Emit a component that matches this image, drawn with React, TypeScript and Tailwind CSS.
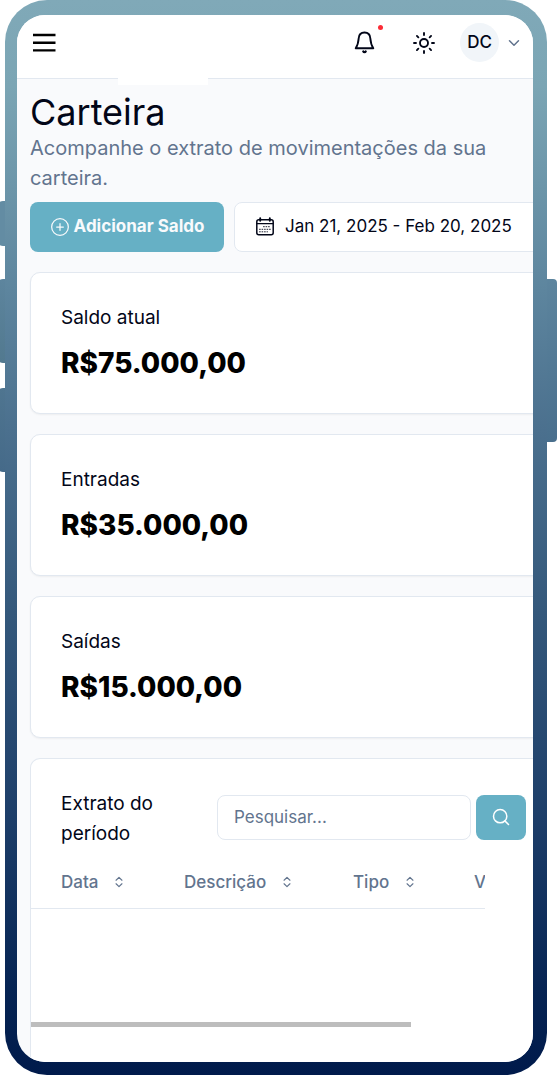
import React from 'react';
import { ChevronDown, ChevronsUpDown, CirclePlus, Search, Sun } from 'lucide-react';

const summary = [
  { label: 'Saldo atual', value: 'R$75.000,00' },
  { label: 'Entradas', value: 'R$35.000,00' },
  { label: 'Saídas', value: 'R$15.000,00' },
];

const MenuIcon: React.FC = () => (
  <svg width="24" height="24" viewBox="0 0 24 24" fill="none" stroke="currentColor" strokeWidth="2.4">
    <path d="M1 4h22.500M1 11.700h22.500M1 19.400h22.500" />
  </svg>
);

const BellIcon: React.FC = () => (
  <svg width="24" height="26" viewBox="0 0 24 26" fill="none" stroke="currentColor" strokeWidth="1.9" strokeLinecap="round" strokeLinejoin="round">
    <path d="M12.500 2.500C8.900 2.500 6.900 4.800 6.700 8.300C6.300 13.500 5.600 15.500 3.700 18.200H21.300C19.400 15.500 18.700 13.500 18.300 8.300C18.100 4.800 16.100 2.500 12.500 2.500Z" />
    <path d="M11.300 21.500c.5.900 1.900.9 2.400 0" strokeWidth="2.3" />
  </svg>
);

const CalendarIcon: React.FC = () => (
  <svg width="20" height="20" viewBox="0 0 20 20" fill="none" stroke="currentColor" strokeLinecap="round">
    <rect x="1.800" y="2.800" width="16.400" height="15" rx="2" strokeWidth="1.500" />
    <path d="M2 6.600h16" strokeWidth="1.300" />
    <path d="M5.200 1.200v2.600M14.800 1.200v2.600" strokeWidth="1.900" />
    <path d="M8.500 9.700h7.500M4.500 12.300h11.500M4.500 14.800h8" strokeWidth="0.9" strokeDasharray="0.8 1.7" />
  </svg>
);

const SortHeader: React.FC<{ children: React.ReactNode }> = ({ children }) => (
  <button type="button" className="flex items-center gap-3.5 font-medium">
    {children}
    <ChevronsUpDown className="h-3.5 w-3.5" strokeWidth={2} />
  </button>
);

const Header: React.FC = () => (
  <header className="relative flex h-16 shrink-0 items-center justify-between border-b border-slate-200 bg-white pb-2 pl-[15px] pr-2.5">
    <button type="button" aria-label="Menu" className="text-black">
      <MenuIcon />
    </button>
    <div className="flex items-center">
      <button type="button" aria-label="Notificações" className="relative mr-9">
        <BellIcon />
        <span className="absolute -right-[7px] -top-[5px] h-[5px] w-[5px] rounded-full bg-red-500" />
      </button>
      <button type="button" aria-label="Tema" className="mr-6">
        <Sun size={24} strokeWidth={1.9} />
      </button>
      <button type="button" className="flex items-center gap-1.5 text-[17px] font-medium">
        <span className="flex h-[39px] w-[39px] items-center justify-center rounded-full bg-slate-100">DC</span>
        <ChevronDown size={18} className="text-slate-500" />
      </button>
    </div>
    <div className="absolute left-[101px] top-full h-[7px] w-[90px] bg-white" />
    <div className="absolute -bottom-px left-[101px] h-px w-[90px] bg-white" />
  </header>
);

const Statement: React.FC = () => (
  <section className="-mr-5 mt-5 flex flex-1 flex-col rounded-tl-[10px] border border-b-0 border-slate-200 bg-white pt-[30px]">
    <div className="flex items-center pl-[30px] pr-[26px]">
      <h2 className="w-32 shrink-0 text-[19px] leading-[30px]">Extrato do período</h2>
      <div className="mb-1 ml-7 flex flex-1 gap-[5px]">
        <input
          type="text"
          aria-label="Pesquisar"
          placeholder="Pesquisar..."
          className="h-[45px] w-full min-w-0 rounded-lg border border-slate-200 px-4 text-[17px] placeholder:text-slate-500"
        />
        <button type="button" aria-label="Buscar" className="flex h-[45px] w-[50px] shrink-0 items-center justify-center rounded-lg bg-[#66b0c5] text-white">
          <Search size={20} strokeWidth={1.8} />
        </button>
      </div>
    </div>

    <div className="mr-[67px] mt-2 overflow-hidden">
      <table className="w-[640px] table-fixed text-left text-[17px] text-slate-500">
        <thead>
          <tr className="h-[51px] border-b border-slate-200">
            <th className="w-[137px] pl-[30px] font-medium"><SortHeader>Data</SortHeader></th>
            <th className="w-[169px] pl-4 font-medium"><SortHeader>Descrição</SortHeader></th>
            <th className="w-[121px] pl-4 font-medium"><SortHeader>Tipo</SortHeader></th>
            <th className="pl-4 font-medium"><SortHeader>Valor</SortHeader></th>
          </tr>
        </thead>
      </table>
      <div className="h-[113px]" />
    </div>
    <div className="mb-[34px] h-[5px] w-[380px] bg-[#bdbdbd]" />
  </section>
);

const App: React.FC = () => {
  return (
    <div className="min-h-screen overflow-hidden bg-white font-['Inter',sans-serif] text-slate-950">
      <div className="relative ml-[5px] mr-2.5 flex min-h-screen flex-col rounded-[42px] bg-[linear-gradient(to_bottom,#80a9b8_0%,#7ba5b4_8%,#5d859e_27%,#4b708e_40%,#34587b_57%,#1d3e69_76%,#062453_92%,#001a4b_100%)] pb-[13px] pl-3 pr-3.5 pt-[15px]">
        {/* Side buttons of the phone */}
        <div className="absolute -left-2 top-[201px] h-[45px] w-2 rounded-l-md bg-[#638ca3]" />
        <div className="absolute -left-2 top-[279px] h-[84px] w-2 rounded-l-md bg-linear-to-b from-[#5d859e] to-[#52798f]" />
        <div className="absolute -left-2 top-[388px] h-[84px] w-2 rounded-l-md bg-linear-to-b from-[#4f7590] to-[#456a89]" />
        <div className="absolute left-full top-[279px] h-[163px] w-2.5 rounded-r-[4px] bg-linear-to-b from-[#5d859e] to-[#496f8d]" />

        <div className="flex flex-1 flex-col overflow-hidden rounded-[28px] bg-[#f9fafc]">
          <Header />
          <main className="flex flex-1 flex-col pl-[13px] pt-3">
            <h1 className="text-4xl leading-[42px]">Carteira</h1>
            <p className="pr-10 text-xl leading-[30px] text-slate-500">Acompanhe o extrato de movimentações da sua carteira.</p>

            <div className="-mr-5 mt-[9px] flex gap-2.5">
              <button type="button" className="flex h-[50px] w-[194px] shrink-0 items-center justify-center gap-1 rounded-lg bg-[#66b0c5] text-[17px] font-bold text-slate-50">
                <CirclePlus size={20} strokeWidth={1.5} />
                Adicionar Saldo
              </button>
              <button type="button" className="flex h-[50px] flex-1 items-center gap-2.5 whitespace-nowrap rounded-lg border border-slate-200 bg-white pl-5 text-[17px]">
                <CalendarIcon />
                Jan 21, 2025 - Feb 20, 2025
              </button>
            </div>

            {summary.map((item) => (
              <section key={item.label} className="-mr-5 mt-5 flex flex-col gap-2.5 rounded-[10px] border border-slate-200 bg-white p-[30px] shadow-xs">
                <h2 className="text-[19px] leading-[30px]">{item.label}</h2>
                <p className="text-[28px] font-extrabold leading-10 text-black">{item.value}</p>
              </section>
            ))}

            <Statement />
          </main>
        </div>
      </div>
    </div>
  );
};

export default App;
